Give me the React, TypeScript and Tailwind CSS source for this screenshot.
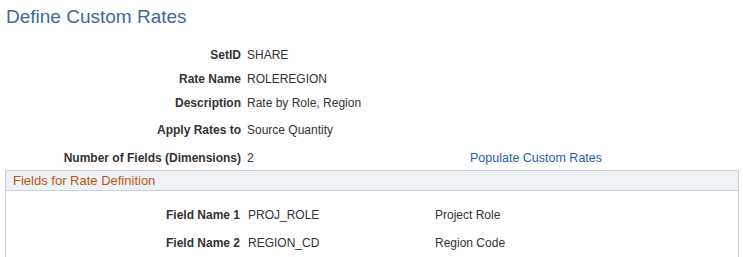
export default function App() {
  const rows: [string, string, number][] = [
    ["SetID", "SHARE", 0],
    ["Rate Name", "ROLEREGION", 4],
    ["Description", "Rate by Role, Region", 4],
    ["Apply Rates to", "Source Quantity", 7],
  ];
  return (
    <div
      className="w-[743px] h-[257px] overflow-hidden bg-white text-[12px] text-[#333333]"
      style={{ fontFamily: '"Liberation Sans", Arial, sans-serif' }}
    >
      <h1 className="pt-[5px] pl-[6px] h-[28px] text-[19px] leading-[24px] text-[#3d6a9c] font-normal">
        Define Custom Rates
      </h1>
      <div className="mt-[17px] flex flex-col">
        {rows.map(([l, v, m], i) => (
          <div key={i} className={`flex h-[20px] items-center ${m === 4 ? "mt-[4px]" : m === 7 ? "mt-[7px]" : ""}`}>
            <div className="w-[241px] text-right font-bold">{l}</div>
            <div className="pl-[6px]">{v}</div>
          </div>
        ))}
        <div className="flex h-[20px] items-center mt-[8px]">
          <div className="w-[241px] text-right font-bold">Number of Fields (Dimensions)</div>
          <div className="pl-[6px] w-[229px]">2</div>
          <a className="text-[12.5px] text-[#1f5fae] cursor-pointer">Populate Custom Rates</a>
        </div>
      </div>
      <div className="mt-[2px] ml-[5px] mr-[4px] border border-[#cbd0d6] h-[200px]">
        <div className="h-[20px] bg-[#eef2f4] border-b border-[#cbd0d6] flex items-center pl-[7px] text-[13px] text-[#b8571c]">
          Fields for Rate Definition
        </div>
        <div className="pt-[14px] flex flex-col gap-[8px]">
          {[
            ["Field Name 1", "PROJ_ROLE", "Project Role"],
            ["Field Name 2", "REGION_CD", "Region Code"],
          ].map(([l, v, d], i) => (
            <div key={i} className="flex h-[20px] items-center">
              <div className="w-[234px] text-right font-bold">{l}</div>
              <div className="pl-[8px] w-[195px]">{v}</div>
              <div>{d}</div>
            </div>
          ))}
        </div>
      </div>
    </div>
  );
}
